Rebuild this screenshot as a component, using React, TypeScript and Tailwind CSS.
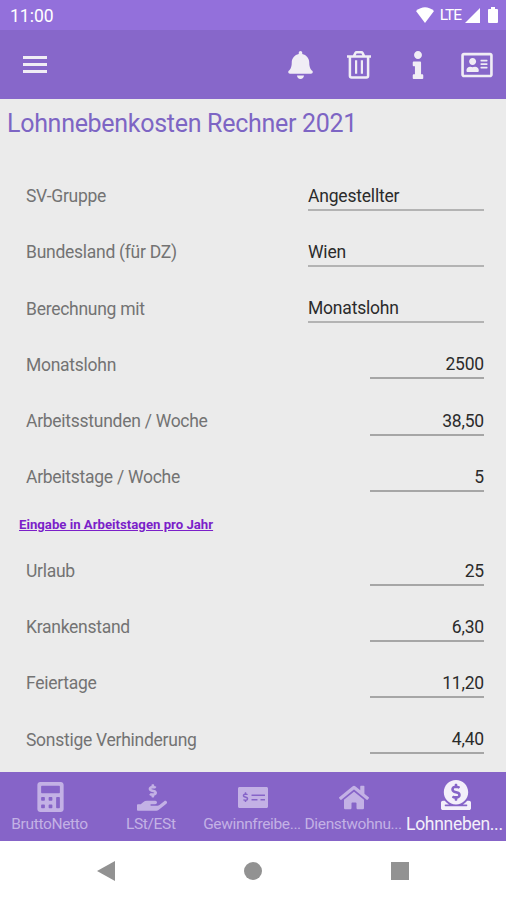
import React, { useState } from 'react';
import {
  FaBell,
  FaCalculator,
  FaDonate,
  FaHandHoldingUsd,
  FaHome,
  FaInfo,
  FaMoneyCheckAlt,
  FaRegAddressCard,
} from 'react-icons/fa';

interface Field {
  label: string;
  value: string;
  select?: boolean;
}

const baseFields: Field[] = [
  { label: 'SV-Gruppe', value: 'Angestellter', select: true },
  { label: 'Bundesland (für DZ)', value: 'Wien', select: true },
  { label: 'Berechnung mit', value: 'Monatslohn', select: true },
  { label: 'Monatslohn', value: '2500' },
  { label: 'Arbeitsstunden / Woche', value: '38,50' },
  { label: 'Arbeitstage / Woche', value: '5' },
];

const absenceFields: Field[] = [
  { label: 'Urlaub', value: '25' },
  { label: 'Krankenstand', value: '6,30' },
  { label: 'Feiertage', value: '11,20' },
  { label: 'Sonstige Verhinderung', value: '4,40' },
];

const tabs = [
  { label: 'BruttoNetto', icon: <FaCalculator className="h-[30px] w-[27px]" /> },
  { label: 'LSt/ESt', icon: <FaHandHoldingUsd className="h-[27px] w-[30px]" /> },
  { label: 'Gewinnfreibe...', icon: <FaMoneyCheckAlt className="h-[27px] w-[30px]" /> },
  { label: 'Dienstwohnu...', icon: <FaHome className="h-[27px] w-[30px]" /> },
  { label: 'Lohnneben...', icon: <FaDonate className="h-[30px] w-[30px]" /> },
];

const TrashIcon = () => (
  <svg viewBox="0 0 24 28" className="h-7 w-6" fill="none" stroke="currentColor" strokeWidth="2.5">
    <path d="M0 5.6h24M2.9 6v18.8a1.7 1.7 0 0 0 1.7 1.7h14.8a1.7 1.7 0 0 0 1.7-1.7V6M6.8 5.3l1.6-3.2q.4-.8 1.2-.8h4.8q.8 0 1.2.8l1.6 3.2" />
    <path d="M9.1 9.3v13.4M14.9 9.3v13.4" strokeWidth="2.2" />
  </svg>
);

const StatusBar = () => (
  <div className="flex h-[30px] items-center justify-between bg-[#9370db] pl-[10px] pr-[8px] text-white">
    <span className="mt-[3px] text-[17.5px] leading-none">11:00</span>
    <div className="flex items-center">
      <svg viewBox="0 0 18 16" className="h-4 w-[18px]" fill="currentColor">
        <path d="M0 4Q9-3.5 18 4L9 16z" />
      </svg>
      <span className="ml-[6px] mt-[2px] text-[15.5px] leading-none tracking-[-1px]">LTE</span>
      <svg viewBox="0 0 15 15" className="ml-[4px] mt-[1px] h-[15px] w-[15px]" fill="currentColor">
        <path d="M15 0v15H0z" />
      </svg>
      <svg viewBox="0 0 10 16" className="ml-[8px] h-4 w-[10px]" fill="currentColor">
        <path d="M3 0h4v2h2q1 0 1 1v12q0 1-1 1H1q-1 0-1-1V3q0-1 1-1h2z" />
      </svg>
    </div>
  </div>
);

const FieldRow: React.FC<{ field: Field }> = ({ field }) => (
  <div className="flex h-[56.15px] items-center justify-between pl-[26px] pr-[22px]">
    <span className="pt-[2px] text-[17.5px] leading-none tracking-[-0.27px] text-[#737373]">{field.label}</span>
    <div
      className={
        field.select
          ? 'h-[30px] w-[176px] border-b-2 border-[#b3b3b3] pt-[7px] text-[17.5px] leading-none tracking-[-0.2px] text-[#2b2b2b]'
          : 'h-[30px] w-[114px] border-b-2 border-[#a6a6a6] pt-[7px] text-right text-[17.5px] leading-none tracking-[-0.2px] text-[#2b2b2b]'
      }
    >
      {field.value}
    </div>
  </div>
);

export default function App() {
  const [active, setActive] = useState(4);

  return (
    <div className="flex h-[900px] w-[506px] flex-col overflow-hidden bg-[#ebebeb] font-['Roboto',sans-serif]">
      <StatusBar />

      <header className="flex h-[69px] items-center justify-between bg-[#8767ca] pl-[23px] pr-[13px] text-[#f0edf5]">
        <button className="flex flex-col gap-[4px]" aria-label="Menu">
          <span className="h-[3px] w-[24px] bg-current" />
          <span className="h-[3px] w-[24px] bg-current" />
          <span className="h-[3px] w-[24px] bg-current" />
        </button>
        <div className="flex items-center">
          <FaBell className="h-7 w-[25px]" />
          <span className="ml-[34px]"><TrashIcon /></span>
          <FaInfo className="ml-[34px] h-7 w-[26px]" />
          <FaRegAddressCard className="ml-[30px] h-7 w-8" />
        </div>
      </header>

      <main className="h-[673px]">
        <h1 className="h-[69px] pl-[7px] pt-[10px] text-[25px] leading-[30px] tracking-[-0.29px] text-[#7d65c4]">
          Lohnnebenkosten Rechner 2021
        </h1>
        {baseFields.map((field) => (
          <FieldRow key={field.label} field={field} />
        ))}
        <div className="flex h-[38px] items-center pl-[19px] pt-[1px]">
          <a className="text-[13.2px] font-bold leading-none text-[#7b1fc9] underline">
            Eingabe in Arbeitstagen pro Jahr
          </a>
        </div>
        {absenceFields.map((field) => (
          <FieldRow key={field.label} field={field} />
        ))}
      </main>

      <nav className="grid h-[69px] grid-cols-5 bg-[#8664c8]">
        {tabs.map((tab, i) => (
          <button
            key={tab.label}
            onClick={() => setActive(i)}
            className={
              i === active
                ? 'flex flex-col items-center whitespace-nowrap text-[17.5px] tracking-[-0.3px] text-[#f3effa]'
                : 'flex flex-col items-center whitespace-nowrap text-[15.5px] tracking-[-0.35px] text-[#c3b1e5]'
            }
          >
            <span className={i === active ? 'flex h-[42px] items-center pt-[4px] pl-[1px]' : 'flex h-[42px] items-center pt-[8px]'}>
              {tab.icon}
            </span>
            <span className="pr-[2px] leading-[20px]">{tab.label}</span>
          </button>
        ))}
      </nav>

      <div className="flex h-[59px] items-center justify-between bg-white px-[97px] pt-[1px] text-[#929292]">
        <svg viewBox="0 0 18 20" className="h-5 w-[18px]" fill="currentColor">
          <path d="M18 0v20L0 10z" />
        </svg>
        <span className="h-[18px] w-[18px] rounded-full bg-current" />
        <span className="h-[18px] w-[18px] bg-current" />
      </div>
    </div>
  );
}
